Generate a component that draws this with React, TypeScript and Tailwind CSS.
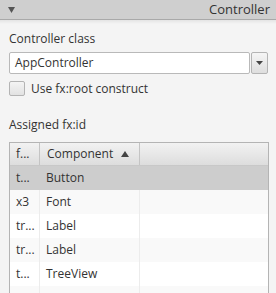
import React from "react";

const rows = [
  { id: "t...", name: "Button", selected: true },
  { id: "x3", name: "Font" },
  { id: "tr...", name: "Label" },
  { id: "tr...", name: "Label" },
  { id: "t...", name: "TreeView" },
  { id: "", name: "" },
];

export default function App() {
  return (
    <div className="w-[276px] h-[293px] overflow-hidden bg-[#f4f4f4] text-[#333] font-['Open_Sans',sans-serif] text-[12px]">
      {/* title bar */}
      <div className="h-[20px] bg-[#cfcfcf] border-b border-[#a9a9a9] flex items-center justify-between pl-[8px] pr-[6px]">
        <svg width="7" height="6" viewBox="0 0 7 6">
          <path d="M0 0 L7 0 L3.5 6 Z" fill="#555" />
        </svg>
        <span className="text-[13px] leading-none">Controller</span>
      </div>
      <div className="h-[4px] bg-gradient-to-b from-[#e4e4e4] to-[#f4f4f4]" />

      <div className="pl-[9px] pr-[8px]">
        <div className="mt-[7px] leading-[16px]">Controller class</div>
        <div className="mt-[5px] flex h-[22px]">
          <div className="flex-1 bg-white border border-[#b9b9b9] rounded-[2px] flex items-center pl-[5px]">
            AppController
          </div>
          <div className="w-[17px] ml-[1px] border border-[#b4b4b4] rounded-[2px] bg-gradient-to-b from-[#f5f5f5] to-[#dedede] flex items-center justify-center">
            <svg width="7" height="4" viewBox="0 0 7 4">
              <path d="M0 0 L7 0 L3.5 4 Z" fill="#444" />
            </svg>
          </div>
        </div>
        <div className="mt-[7px] flex items-center h-[15px]">
          <div className="w-[16px] h-[15px] border border-[#b4b4b4] rounded-[2px] bg-gradient-to-b from-[#f4f4f4] to-[#e2e2e2]" />
          <span className="ml-[6px]">Use fx:root construct</span>
        </div>

        <div className="mt-[23px] leading-[12px]">Assigned fx:id</div>

        <div className="mt-[11px] w-[260px] border-l border-r border-t border-[#b4b4b4] bg-white">
          <div className="flex h-[23px] bg-gradient-to-b from-[#f2f2f2] to-[#dddddd] border-b border-[#c8c8c8]">
            <div className="w-[30px] border-r border-[#c4c4c4] flex items-center pl-[6px]">f...</div>
            <div className="w-[100px] border-r border-[#c4c4c4] flex items-center pl-[7px]">
              Component
              <svg className="ml-[8px]" width="8" height="6" viewBox="0 0 8 6">
                <path d="M0 6 L4 0 L8 6 Z" fill="#444" />
              </svg>
            </div>
            <div className="flex-1" />
          </div>
          {rows.map((r, i) => (
            <div
              key={i}
              className={`flex h-[24px] ${
                r.selected ? "bg-[#cdcdcd]" : i % 2 === 1 ? "bg-[#f9f9f9]" : "bg-white"
              }`}
            >
              <div className={`w-[30px] flex items-center pl-[6px] ${r.selected ? "" : "border-r border-[#ececec]"}`}>{r.id}</div>
              <div className={`w-[100px] flex items-center pl-[6px] ${r.selected ? "" : "border-r border-[#ececec]"}`}>{r.name}</div>
              <div className="flex-1" />
            </div>
          ))}
        </div>
      </div>
    </div>
  );
}
